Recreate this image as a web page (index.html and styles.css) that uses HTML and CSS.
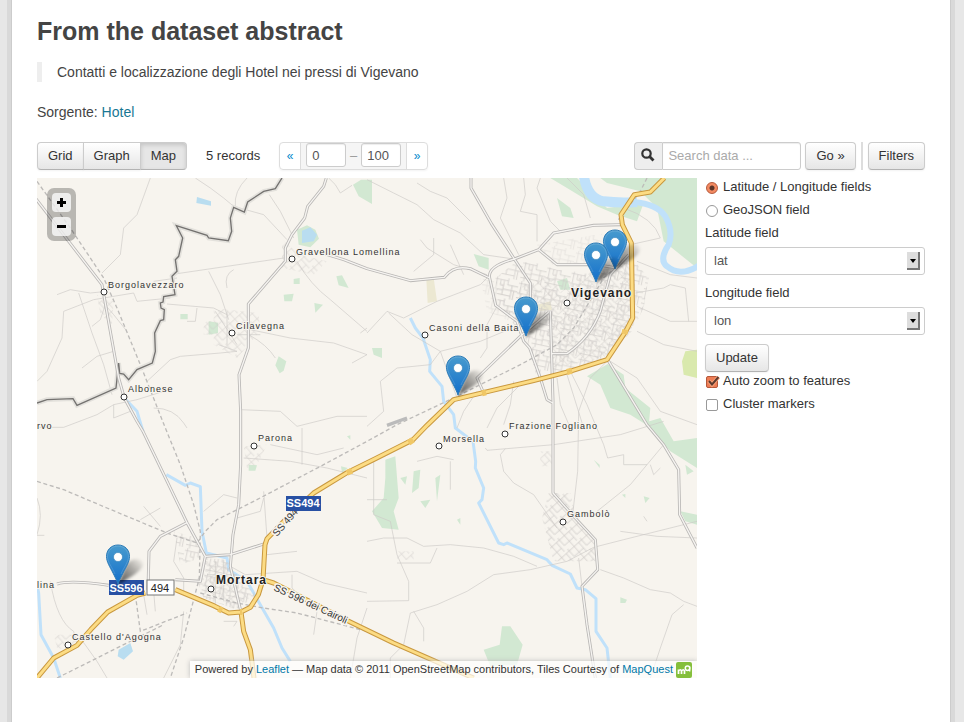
FILE: index.html
```html
<!DOCTYPE html>
<html lang="it">
<head>
<meta charset="utf-8">
<title>Hotel</title>
<link rel="stylesheet" href="styles.css">
</head>
<body>
<main class="wrapper">
  <h1>From the dataset abstract</h1>
  <blockquote>Contatti e localizzazione degli Hotel nei pressi di Vigevano</blockquote>
  <p class="source">Sorgente: <a href="#">Hotel</a></p>

  <div class="toolbar">
    <div class="views" role="group" aria-label="Views">
      <button type="button" class="btn">Grid</button>
      <button type="button" class="btn">Graph</button>
      <button type="button" class="btn active">Map</button>
    </div>
    <span class="records">5 records</span>
    <div class="pager">
      <a href="#" aria-label="Previous">«</a>
      <div class="range"><input type="text" value="0" aria-label="From"><span>–</span><input type="text" value="100" aria-label="To"></div>
      <a href="#" aria-label="Next">»</a>
    </div>
    <form class="search">
      <div class="query">
        <label for="q" aria-label="Search data"><svg width="14" height="14" viewBox="0 0 14 14"><circle cx="5.500" cy="5.500" r="4.200" fill="none" stroke="#333" stroke-width="2.200"/><path d="M8.500 8.500L12.500 12.500" stroke="#333" stroke-width="2.800"/></svg></label>
        <input id="q" type="text" placeholder="Search data ...">
      </div>
      <button type="button" class="btn">Go »</button>
    </form>
    <div class="menu"><button type="button" class="btn">Filters</button></div>
  </div>

  <div class="explorer">
    <div class="map">
      <svg class="canvas" viewBox="0 0 660 500" preserveAspectRatio="xMidYMid slice" role="img" aria-label="Map">
        <defs>
          <linearGradient id="pin" x1="0" y1="0" x2="0" y2="1"><stop offset="0" stop-color="#489bce"/><stop offset="1" stop-color="#136fcb"/></linearGradient>
          <linearGradient id="shade" x1="0" y1="1" x2="1" y2="0"><stop offset="0" stop-color="#000" stop-opacity=".7"/><stop offset=".6" stop-color="#000" stop-opacity=".3"/><stop offset="1" stop-color="#000" stop-opacity="0"/></linearGradient>
          <filter id="soft" x="-30%" y="-30%" width="160%" height="160%"><feGaussianBlur stdDeviation="1.600"/></filter>
          <g id="marker">
            <path d="M0 0L8 -20C13 -28 25 -27 25 -21C25 -14 12 -8 0 0Z" fill="url(#shade)" filter="url(#soft)"/>
            <path d="M0 -40C-7 -40 -11.500 -35 -11.500 -28.500C-11.500 -23 -8 -18 -5 -12C-3 -8 -1 -4 0 -1C1 -4 3 -8 5 -12C8 -18 11.500 -23 11.500 -28.500C11.500 -35 7 -40 0 -40Z" fill="url(#pin)" stroke="#2e7cb7"/>
            <path d="M-3 -11C-6 -18 -10.500 -23 -10.500 -28.500C-10.500 -34 -6 -39 0 -39S10.500 -34 10.500 -28.500C10.500 -23 6 -18 3 -11" fill="none" stroke="#fff" stroke-opacity=".15"/>
            <circle cy="-28" r="4.500" fill="#fff" stroke="#2f7db5" stroke-width=".6"/>
          </g>
          <pattern id="blocks" width="74" height="62" patternUnits="userSpaceOnUse" patternTransform="rotate(12)">
            <path class="lane" d="M0 8H42M30 8V35H74M8 0V38M0 38H30M42 0V20H74M56 20V62M12 38V62M0 52H56M30 35V52M64 35V62M20 8V24H30"/>
          </pattern>
          <pattern id="grid" width="50" height="44" patternUnits="userSpaceOnUse" patternTransform="rotate(-42)">
            <path class="lane" d="M0 8H50M8 0V44M0 30H26M26 8V44M38 0V30H50"/>
          </pattern>
          <g id="highways">
            <path d="M1882 0L1840 42L1792 50L1752 110L1756 140L1783 195L1787 420L1765 462L1710 545L1598 580L1490 608L1250 665L1170 742L1128 785L1015 842L930 884L830 945L745 1025L690 1082L684 1100L678 1205L664 1250L640 1288L612 1302L575 1305L530 1283L415 1235M325 1245L300 1252L212 1302L162 1354L120 1402L50 1440L0 1500M612 1302L620 1360L640 1415L651 1500M678 1205L710 1215L915 1320L1070 1395L1310 1500"/>
          </g>
          <g id="roads">
            <path d="M868 0L860 25L812 85L803 120L765 170L745 210V250L634 378V510L606 590L611 700V860L605 980L588 1070L580 1165L612 1302"/>
            <path d="M-5 60L195 320L245 600L262 660L300 730L318 760L450 1034L505 1135L580 1130L686 1096M450 1034L370 1075L336 1120L333 1235M60 1218Q100 1205 215 1222M505 1135L490 1210L415 1205"/>
            <path d="M865 228L920 245L990 272L1120 308L1222 298Q1250 260 1300 272L1358 300L1376 382L1440 430L1460 490L1478 510L1510 600L1530 665L1547 675M1358 300Q1350 265 1432 243L1505 215L1550 165L1670 142L1750 140M1302 0V30L1365 140L1432 243L1480 315V360M1505 215L1560 260H1680L1740 270M1340 645L1320 600L1450 475L1535 403M1540 400L1548 670V945L1610 1015L1675 1085L1682 1175L1635 1225L1650 1340L1675 1500M1545 527H1590Q1660 480 1690 400L1720 290L1775 230M1712 545L1830 740L1880 800L1925 875L1928 1010L1980 1110"/>
          </g>
        </defs>

        <rect width="660" height="500" fill="#f7f4ee"/>
        <svg width="660" height="500" viewBox="0 0 1980 1500">
          <g class="park">
            <path d="M948 20L972 5H1005V78L965 55ZM780 155L810 142L835 155L846 182L820 208L785 200ZM725 535L748 550L740 578L728 586L715 562ZM898 295L915 292L935 330L905 322ZM740 350L770 347L765 370H742ZM832 375L858 380L835 404ZM770 303L788 300V318H770ZM515 430L543 434V465L515 470ZM430 408H452V424H430Z"/>
            <path d="M1540 0H1620L1710 90L1820 75L1800 130L1740 110L1680 85L1590 30ZM1690 0H1980V270L1880 190L1860 90L1810 40L1710 15ZM1560 60L1600 90L1610 120L1575 115ZM1310 228L1355 240V275L1325 265ZM1560 310L1590 300L1600 335L1570 335ZM1005 510L1035 510V540L1010 530ZM1650 595L1712 558L1760 590L1765 630L1840 690L1835 745L1780 710L1720 690L1690 620ZM1820 735L1870 720L1910 790L1980 780V870L1900 820ZM1930 1000L1980 1010V1040L1945 1030Z"/>
            <path d="M1045 845L1075 835L1085 960L1070 1000L1085 1055L1035 1050L1005 1000L1040 960L1045 900ZM1395 1345H1420L1457 1400L1440 1460L1360 1465L1340 1415L1388 1400ZM1130 880L1150 875L1145 930L1125 945ZM1090 900L1110 895L1105 920ZM1150 970L1180 965L1165 990ZM1195 900L1210 890L1200 970ZM1260 1025L1270 1020V1040ZM1670 845L1688 860V870ZM1820 955L1838 960L1825 975ZM1755 950L1765 948V960ZM1945 860L1970 880L1950 890ZM1750 1258L1770 1265L1765 1275H1750ZM635 860L660 862L655 878L635 878ZM912 865L932 870L915 885ZM930 775L940 772V785Z"/>
          </g>
          <path class="meadow" d="M1935 550L1945 520L1980 515V600L1940 590Z"/>
          <path class="sand" d="M1168 305L1190 300L1200 370L1172 375ZM1500 380L1540 370L1545 395L1500 400Z"/>
          <path class="lake" d="M480 57L522 70V83L478 75ZM795 158L820 148L840 170L830 190L795 195ZM245 1415L280 1395L288 1420L260 1445L242 1435Z"/>
          <path class="river" d="M1640 -10Q1650 62 1700 70Q1750 76 1800 72"/>
          <path class="river-bend" d="M1790 72Q1860 78 1885 115Q1910 160 1895 200Q1865 245 1890 265Q1930 300 1990 260"/>
          <g class="stream">
            <path d="M1120 420L1135 450L1158 480L1180 545L1178 580L1215 625L1220 670L1250 710L1255 750L1308 790L1316 850L1315 870L1340 930L1335 965L1325 975L1385 1095L1400 1100L1410 1095L1530 1145L1545 1162L1600 1188L1620 1230L1645 1235L1677 1262V1360L1710 1410L1720 1500"/>
            <path d="M262 660L300 700L318 760M388 890L445 922L460 915L490 926L495 1060L508 1125L570 1140L575 1175L630 1210L670 1280L710 1350L735 1410L760 1450M0 1220L5 1245L12 1370L50 1440L70 1500"/>
          </g>
          <g class="lane">
            <path d="M340 0L300 110L260 150L250 230L195 285M60 350L100 335L160 345L210 340M125 345L165 465L200 560L225 650M0 610L30 580L75 480L80 400L170 365L290 345L300 370L400 360M400 290L740 240M350 310L420 300M475 0L520 30L560 60L590 85L680 110L750 185M595 85Q590 40 630 0M697 50L730 100L770 180M780 250Q820 320 880 365L990 460M390 378L530 390L570 410M515 280L550 350L575 425M570 330Q560 290 590 275M330 610L400 545L430 535L550 525L600 520M640 455L760 480L890 495L990 530M945 555L990 530M635 470Q690 500 715 540M0 748H80L180 710L230 680L300 665L380 640M230 680V720L280 700M350 690Q410 690 440 735L450 750M610 695L730 700L780 745L900 715H990M135 570L180 535L230 520M205 380L190 425L165 445M875 0L895 20L910 45L945 22M970 465L990 450M195 370L230 410L270 460M480 390L475 430H450"/>
            <path d="M990 5L1070 45L1140 80L1190 125L1270 165L1340 230L1430 243M1140 15L1180 40L1230 60L1300 130M1400 0L1410 60L1390 120L1420 180L1445 230M1460 0L1465 50L1450 100L1500 110V190M1510 0L1500 30L1540 130L1570 160M990 465L1050 400L1100 420L1200 370L1330 320L1350 300M1055 405L1125 470L1210 520L1330 490L1450 440M1210 520L1260 660M1210 520L1180 560L1080 570L1030 610L1040 700L990 745M1150 185L1170 210L1250 260L1350 290M1330 540L1350 510V440L1380 385M1560 600L1570 680L1600 750M1590 590L1640 750M1600 580L1650 680L1700 800L1712 840L1760 830V860L1830 860M1715 545L1660 600L1625 700L1622 880L1608 1000M1800 385L1900 430H1980M1795 345L1880 330L1900 320L1945 330L1955 430M1800 250L1900 290L1980 300M1800 460L1880 500L1980 520M1720 550L1800 600L1870 700L1980 740M1780 200L1870 180Q1850 120 1760 90M1320 640L1280 700L1260 750M1430 610L1420 680L1400 740M1460 610L1380 690L1350 750"/>
            <path d="M1345 810L1350 817L1550 800L1750 770L1880 730M1405 812L1390 830L1400 880L1430 915L1490 950L1525 1000L1560 1050M990 1090L1040 1080L1110 1080L1160 1105L1240 1100L1340 1110L1430 1135L1500 1165M990 1270L1115 1268V1210L1080 1130L1060 1030L1010 1010V850M1120 1305L1200 1280L1290 1240L1370 1190L1480 1175L1590 1150L1670 1108L1760 1085L1980 1030M1690 1175L1760 1200L1840 1235L1900 1245L1940 1270L1980 1285M1625 1140L1635 1225M1680 1000L1780 920L1880 800M1940 1280L1905 1310L1870 1410L1840 1500M1120 1305L1100 1400L1060 1440V1500M1130 1300L1160 1350V1390M1080 1155H1180L1200 1110M990 965H1050M1240 850V935M1140 850L1200 835L1250 845M1840 860L1850 890L1870 870M1830 1030L1820 1015M1750 1060L1860 1075L1980 1080M1590 0L1640 50L1660 120M1240 200L1280 290M1190 180V230L1130 280"/>
            <path d="M0 960Q20 1010 0 1070M0 1072H22M40 1210Q60 1330 110 1360L120 1400M320 985L370 1045M310 1025L370 990M420 1080L410 1150L440 1200V1240M680 940L690 1080M580 1165L625 1190L780 1180L860 1215L990 1245M690 1130L780 1120M765 1190V1230L840 1300L830 1370M940 1500L960 1380L990 1290M620 840L760 850L870 870L990 900M600 1020L670 1000L680 960M500 1000L560 950L600 960M560 1330H600L590 1345M440 1300L430 1400L380 1500M130 1380L180 1450L210 1500M795 750V860M700 800L840 830L920 810"/>
          </g>
          <path fill="url(#blocks)" d="M1375 300L1440 250L1500 255L1560 275L1650 285L1780 235L1835 300L1820 390L1785 460L1700 545L1500 600L1470 490L1385 380Z"/>
          <path fill="url(#grid)" opacity=".7" d="M1520 380L1640 290L1780 250L1785 450L1700 540L1540 570ZM1450 320L1550 290L1580 380L1500 380Z"/>
          <path fill="url(#blocks)" opacity=".5" d="M1500 200L1740 160L1770 240L1550 265ZM1330 300L1460 330L1440 440L1350 400Z"/>
          <path fill="url(#blocks)" d="M500 1140L570 1145L600 1200L660 1250L600 1295L500 1260L480 1210ZM410 1060L480 1080L490 1140L430 1160Z"/>
          <path fill="url(#grid)" opacity=".7" d="M500 1150L570 1150L610 1220L640 1260L590 1290L500 1240Z"/>
          <path fill="url(#grid)" d="M1535 945H1600L1620 1030L1670 1090L1680 1150L1550 1150L1515 1020Z"/>
          <path fill="url(#grid)" opacity=".7" d="M530 390L665 405L670 460L600 540L530 500ZM735 185L790 230L870 250L830 290L735 270ZM180 350L230 370L225 440L190 410ZM620 805L690 800L660 860L630 870ZM50 1370L120 1370L110 1420L60 1410ZM500 430H545V470H500ZM1080 1120H1130V1145H1080ZM1510 820H1550V865H1510Z"/>
          <path class="lane" d="M535 400L600 500M570 400V500M600 470H670M545 500L600 520M320 1250L330 1310M350 1240L355 1300M535 1150V1280M560 1145V1270M510 1190H600"/>
          <path class="rail" d="M0 10L100 150L200 300L240 390L310 560L385 750L430 860L470 980L490 1060L487 1200L440 1380L400 1500M0 910L80 935L210 990L390 1065L480 1095L505 1060L540 1025L650 970L860 860L990 790L1080 740L1260 655L1450 560L1560 500L1610 450L1700 300L1770 240M1830 0L1810 40L1740 130M490 1245L600 1275L680 1290L780 1305L990 1360M295 1250L310 1360L450 1305M60 1500L200 1430L380 1340"/>
          <path class="station" d="M1050 742L1110 720"/>
          <path class="limit-halo" d="M735 0L715 32L680 40L632 72L622 102L590 88L580 120L584 160L574 188L515 180L510 172L418 143L437 180L425 235L415 245L420 280L405 295L414 350L380 356L378 372L370 375L372 390L382 395L380 425L370 428L353 465L355 520L346 555L300 575L275 605L260 588L248 586L245 555L237 630L120 682L108 662L30 665L0 675"/>
          <path class="limit" d="M735 0L715 32L680 40L632 72L622 102L590 88L580 120L584 160L574 188L515 180L510 172L418 143L437 180L425 235L415 245L420 280L405 295L414 350L380 356L378 372L370 375L372 390L382 395L380 425L370 428L353 465L355 520L346 555L300 575L275 605L260 588L248 586L245 555L237 630L120 682L108 662L30 665L0 675"/>
          <use href="#roads" class="road-casing"/><use href="#roads" class="road-fill"/>
          <use href="#highways" class="highway-casing"/><use href="#highways" class="highway-fill"/>
          <path class="junction" d="M1128 785L1115 794M1765 455L1762 468M1590 582L1605 578M1335 646L1347 643M930 884L945 878M545 1292L555 1298M609 1302L615 1302"/>
        </svg>

        <g class="town">
          <circle cx="67" cy="114" r="3"/><circle cx="255" cy="81" r="3"/><circle cx="195" cy="155" r="3"/><circle cx="87" cy="219" r="3"/><circle cx="388" cy="157" r="3"/><circle cx="530" cy="125" r="3"/><circle cx="174" cy="411" r="3"/><circle cx="217" cy="268" r="3"/><circle cx="31" cy="467" r="3"/><circle cx="402" cy="268" r="3"/><circle cx="468" cy="256" r="3"/><circle cx="526" cy="344" r="3"/>
        </g>
        <g class="name">
          <text x="71" y="110">Borgolavezzaro</text><text x="259" y="77">Gravellona Lomellina</text><text x="199" y="151">Cilavegna</text><text x="91" y="214">Albonese</text><text x="0" y="251">rvo</text><text x="392" y="153">Casoni della Baita</text><text x="472" y="251">Frazione Fogliano</text><text x="221" y="263">Parona</text><text x="406" y="264">Morsella</text><text x="530" y="339">Gambolò</text><text x="35" y="462">Castello d'Agogna</text><text x="0" y="410">lina</text>
        </g>
        <g class="city"><text x="534" y="119">Vigevano</text><text x="179" y="406">Mortara</text></g>
        <g class="street"><text transform="translate(240 359) rotate(-49)">SS 494</text><text transform="translate(236 412) rotate(25)">SS 596 dei Cairoli</text></g>
        <g class="shield">
          <rect x="249" y="318" width="35" height="15"/><text x="266" y="329">SS494</text>
          <rect x="72" y="402" width="35" height="15"/><text x="89" y="414">SS596</text>
        </g>
        <g class="shield-local"><rect x="110" y="402" width="27" height="15"/><text x="123" y="414">494</text></g>
        <use href="#marker" x="578" y="92"/><use href="#marker" x="559" y="105"/><use href="#marker" x="489" y="159"/><use href="#marker" x="421" y="218"/><use href="#marker" x="81" y="407"/>
      </svg>
      <div class="zoom">
        <button type="button" aria-label="Zoom in"><svg width="19" height="19"><path d="M5 9.500H14M9.500 5V14" stroke="#000" stroke-width="3"/></svg></button>
        <button type="button" aria-label="Zoom out"><svg width="19" height="19"><path d="M5 9.500H14" stroke="#000" stroke-width="3"/></svg></button>
      </div>
      <div class="attribution">Powered by <a href="#">Leaflet</a> — Map data © 2011 OpenStreetMap contributors, Tiles Courtesy of <a href="#">MapQuest</a>
        <svg width="16" height="16" viewBox="0 0 16 16"><rect width="16" height="16" rx="2" fill="#85bf3b"/><path d="M2.500 12V7.500M2.500 9Q4.500 6.500 5.500 9V12M5.500 9Q7.500 6.500 8.500 9V12" fill="none" stroke="#fff" stroke-width="1.700"/><circle cx="11.500" cy="6.300" r="2.200" fill="none" stroke="#fff" stroke-width="1.500"/><path d="M13.700 4.500V9.500" stroke="#fff" stroke-width="1.400"/></svg>
      </div>
    </div>

    <form class="options">
      <label class="choice"><input type="radio" name="mode" checked>Latitude / Longitude fields</label>
      <label class="choice"><input type="radio" name="mode">GeoJSON field</label>
      <label class="caption" for="lat">Latitude field</label>
      <div class="select"><select id="lat"><option>lat</option></select></div>
      <label class="caption" for="lon">Longitude field</label>
      <div class="select"><select id="lon"><option>lon</option></select></div>
      <button type="button" class="btn">Update</button>
      <label class="choice"><input type="checkbox" checked><svg class="tick" width="15" height="13" viewBox="0 0 15 13"><path d="M4 6L7 9.500L13.500 2" fill="none" stroke="#f7a37c" stroke-width="4"/><path d="M4 6L7 9.500L13.500 2" fill="none" stroke="#5d3a2e" stroke-width="2"/></svg>Auto zoom to features</label>
      <label class="choice"><input type="checkbox">Cluster markers</label>
    </form>
  </div>
</main>
</body>
</html>
```

FILE: styles.css
```css
*, ::before, ::after { box-sizing: border-box; }

body {
  margin: 0;
  padding: 0 13px 0 11px;
  background: #e7e7e7;
  color: #444;
  font: 14px/20px "Liberation Sans", Arial, sans-serif;
}

a { color: #187794; text-decoration: none; }

button, input, select { font: inherit; margin: 0; }

.wrapper {
  min-height: 100vh;
  padding: 11px 25px 44px;
  background: #fff;
  border: solid #ccc;
  border-width: 0 1px;
  box-shadow: 0 0 0 4px rgba(0, 0, 0, .06);
}

h1 {
  margin: 0 0 11px;
  font-size: 25px;
  line-height: 40px;
}

blockquote {
  margin: 0 0 20px;
  padding-left: 15px;
  border-left: 5px solid #eee;
}

.source { margin: 0 0 20px; }

.toolbar, .explorer { font-size: 13px; line-height: 18px; color: #333; }

.btn {
  padding: 4px 10px;
  border: 1px solid #ccc;
  border-bottom-color: #b3b3b3;
  border-radius: 4px;
  background: linear-gradient(#fff, #e6e6e6);
  box-shadow: 0 1px 2px rgba(0, 0, 0, .05);
  color: #333;
  line-height: 18px;
}

.toolbar {
  display: flex;
  align-items: stretch;
  height: 28px;
  margin-bottom: 8px;
}

.views { display: flex; }
.views .btn { border-radius: 0; }
.views .btn + .btn { margin-left: -1px; }
.views .btn:first-child { border-radius: 4px 0 0 4px; }
.views .btn:last-child { border-radius: 0 4px 4px 0; }
.views .active { background: #e6e6e6; box-shadow: inset 0 2px 4px rgba(0, 0, 0, .15); }

.records { margin: 0 19px; line-height: 28px; }

.pager {
  display: flex;
  border: 1px solid #ddd;
  border-radius: 4px;
  box-shadow: 0 1px 2px rgba(0, 0, 0, .05);
}
.pager a { width: 20px; color: #08c; line-height: 26px; text-align: center; font-size: 12px; }
.range {
  display: flex;
  align-items: flex-start;
  padding: 0 5px;
  background: #f5f5f5;
  border: solid #ddd;
  border-width: 0 1px;
  color: #999;
}
.range span { width: 15px; text-align: center; line-height: 26px; }
.range input { width: 40px; height: 24px; padding: 0 5px; }

input[type="text"] {
  border: 1px solid #ccc;
  border-radius: 3px;
  background: #fff;
  color: #555;
  box-shadow: inset 0 1px 1px rgba(0, 0, 0, .075);
}
input::placeholder { color: #aaa; }

.search { display: flex; gap: 4px; margin-left: auto; }
.query { display: flex; }
.query label {
  width: 28px;
  padding: 5px 6px;
  border: 1px solid #ccc;
  border-right: 0;
  border-radius: 4px 0 0 4px;
  background: #eee;
}
.query input { width: 139px; padding: 0 5px; border-radius: 0 3px 3px 0; }
.menu { display: flex; margin-left: 5px; padding-left: 5px; border-left: 2px solid #ddd; }

.explorer { display: flex; gap: 8px; }

.map { position: relative; flex: 1; height: 500px; overflow: hidden; }
.canvas { display: block; width: 100%; height: 100%; font-family: "Liberation Sans", Arial, sans-serif; }

.park { fill: #d2e8d2; }
.meadow { fill: #d9e9ad; }
.sand { fill: #ece8d2; }
.lake { fill: #b9ddf0; }
.river, .river-bend, .stream { fill: none; stroke: #c0e1fa; stroke-linejoin: round; }
.river { stroke-width: 30; }
.river-bend { stroke-width: 18; }
.stream { stroke-width: 9; }
.lane { fill: none; stroke: #cdcac7; stroke-width: 2; }
.rail { fill: none; stroke: #bdbbb9; stroke-width: 4; stroke-dasharray: 12 8; }
.station { stroke: #bbb; stroke-width: 10; }
.limit-halo { fill: none; stroke: #e3e1dc; stroke-width: 14; }
.limit { fill: none; stroke: #747270; stroke-width: 4; }
.road-casing, .road-fill, .highway-casing, .highway-fill { fill: none; stroke-linejoin: round; }
.road-casing { stroke: #b9b7b5; stroke-width: 9; }
.road-fill { stroke: #f6f4f1; stroke-width: 4; }
.highway-casing { stroke: #c9983f; stroke-width: 15; }
.highway-fill { stroke: #fcdc84; stroke-width: 9; }
.junction { stroke: #f0c766; stroke-width: 18; }

.town { fill: #fff; stroke: #333; stroke-width: 1; }
.name, .city { letter-spacing: 1px; paint-order: stroke; stroke: #f7f4ee; stroke-width: 2px; stroke-linejoin: round; }
.name { fill: #333; font-size: 9px; }
.city { fill: #222; font-size: 12px; font-weight: bold; }
.street { fill: #333; font-size: 10px; paint-order: stroke; stroke: #f7f4ee; stroke-width: 3px; }
.shield { fill: #2850a3; text-anchor: middle; font-size: 11px; font-weight: bold; }
.shield text { fill: #fff; }
.shield-local { fill: #fff; text-anchor: middle; font-size: 11px; }
.shield-local rect { stroke: #777; }
.shield-local text { fill: #222; }

.zoom {
  position: absolute;
  top: 10px;
  left: 10px;
  display: grid;
  gap: 5px;
  padding: 5px;
  border-radius: 7px;
  background: rgba(0, 0, 0, .25);
}
.zoom button {
  width: 19px;
  height: 19px;
  padding: 0;
  border: 0;
  border-radius: 4px;
  background: rgba(255, 255, 255, .75);
}
.zoom svg { display: block; }

.attribution {
  position: absolute;
  right: 0;
  bottom: 0;
  display: flow-root;
  padding: 0 5px;
  background: rgba(255, 255, 255, .7);
  box-shadow: 0 0 5px #bbb;
  font-size: 11px;
  line-height: 17px;
  white-space: nowrap;
}
.attribution a { color: #0078a8; }
.attribution svg { vertical-align: top; margin-top: 1px; }

.options { width: 220px; }
.choice {
  position: relative;
  display: flex;
  align-items: center;
  gap: 5px;
  margin-bottom: 5px;
}
.choice input {
  appearance: none;
  width: 12px;
  height: 12px;
  margin: 2px 0 0 1px;
  border: 1px solid #999;
  border-radius: 2px;
  background: #fff;
}
.choice input[type="radio"] { border-radius: 50%; }
.choice input[type="radio"]:checked {
  border-color: #b5583a;
  background: radial-gradient(circle, #5a3428 0 2px, #f38a62 3px);
}
.choice input[type="checkbox"]:checked { border-color: #b5583a; background: #ee7d55; }
.tick { position: absolute; left: 0; top: 3px; }

.caption { display: block; margin-bottom: 5px; }

.select { position: relative; margin-bottom: 9px; }
.select select {
  appearance: none;
  display: block;
  width: 100%;
  height: 28px;
  padding: 0 8px;
  border: 1px solid #ccc;
  border-radius: 3px;
  background: #fff;
  color: #555;
}
.select::before {
  content: "";
  position: absolute;
  right: 5px;
  top: 5px;
  width: 13px;
  height: 18px;
  background: #ddd;
  border: solid #777;
  border-width: 0 2px 2px 0;
  pointer-events: none;
}
.select::after {
  content: "";
  position: absolute;
  right: 9px;
  top: 12px;
  border: solid transparent;
  border-width: 4px 3px 0;
  border-top-color: #000;
  pointer-events: none;
}
.options .btn { display: block; }
```
